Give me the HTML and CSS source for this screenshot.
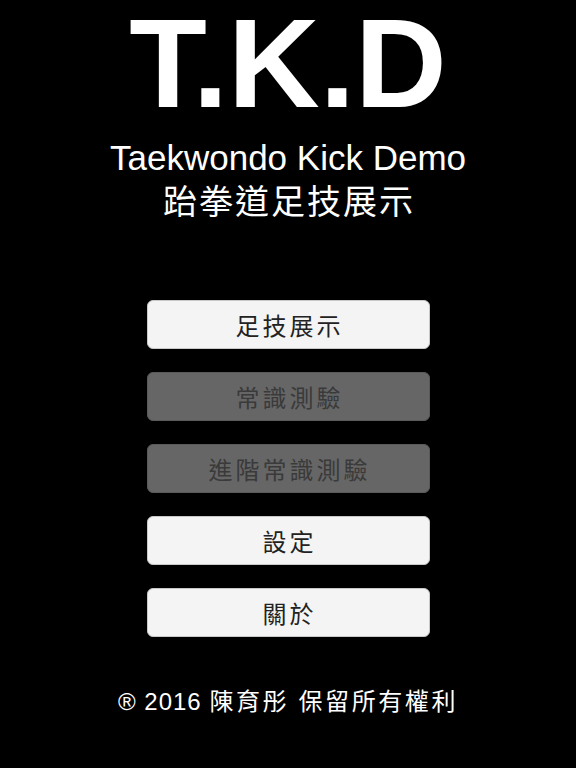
FILE: index.html
```html
<!DOCTYPE html>
<html lang="zh-Hant">
<head>
<meta charset="utf-8">
<title>T.K.D</title>
<link rel="stylesheet" href="styles.css">
</head>
<body>
<div class="screen">
  <header class="header">
    <h1 class="logo">T.K.D</h1>
    <p class="subtitle-en">Taekwondo Kick Demo</p>
    <p class="subtitle-zh">跆拳道足技展示</p>
  </header>
  <nav class="menu">
    <button class="btn">足技展示</button>
    <button class="btn btn-disabled">常識測驗</button>
    <button class="btn btn-disabled">進階常識測驗</button>
    <button class="btn">設定</button>
    <button class="btn">關於</button>
  </nav>
  <footer class="footer"><span class="latin">® 2016 </span><span class="cjk">陳育彤 保留所有權利</span></footer>
</div>
</body>
</html>
```
FILE: styles.css
```css
html, body {
  margin: 0;
  padding: 0;
  background: #000;
}
.screen {
  width: 576px;
  height: 768px;
  display: flex;
  flex-direction: column;
  align-items: center;
  color: #fff;
  font-family: "Liberation Sans", "Noto Sans CJK TC", sans-serif;
}
.header {
  display: flex;
  flex-direction: column;
  align-items: center;
}
.logo {
  margin: 0;
  font-size: 127px;
  line-height: 127px;
  font-weight: bold;
  letter-spacing: 0;
}
.subtitle-en {
  margin: 11px 0 0;
  font-size: 35px;
  line-height: 40px;
}
.subtitle-zh {
  margin: 3px 0 0;
  font-size: 34px;
  line-height: 37px;
  letter-spacing: 2px;
  padding-left: 2px;
  font-family: "Noto Sans CJK TC", sans-serif;
}
.menu {
  margin-top: 82px;
  display: flex;
  flex-direction: column;
  gap: 23px;
}
.btn {
  width: 283px;
  height: 49px;
  margin: 0;
  padding: 0 0 0 3px;
  border: 1px solid #c8c8c8;
  border-radius: 6px;
  background: #f4f4f4;
  color: #222;
  font-family: "Noto Sans CJK TC", sans-serif;
  font-size: 24px;
  letter-spacing: 3px;
  line-height: 1;
}
.btn-disabled {
  background: #666;
  border-color: #5a5a5a;
  color: #3a3a3a;
}
.footer {
  margin-top: 50px;
  font-size: 24px;
  line-height: 30px;
}
.latin {
  letter-spacing: 1px;
}
.cjk {
  letter-spacing: 2.6px;
}
```
